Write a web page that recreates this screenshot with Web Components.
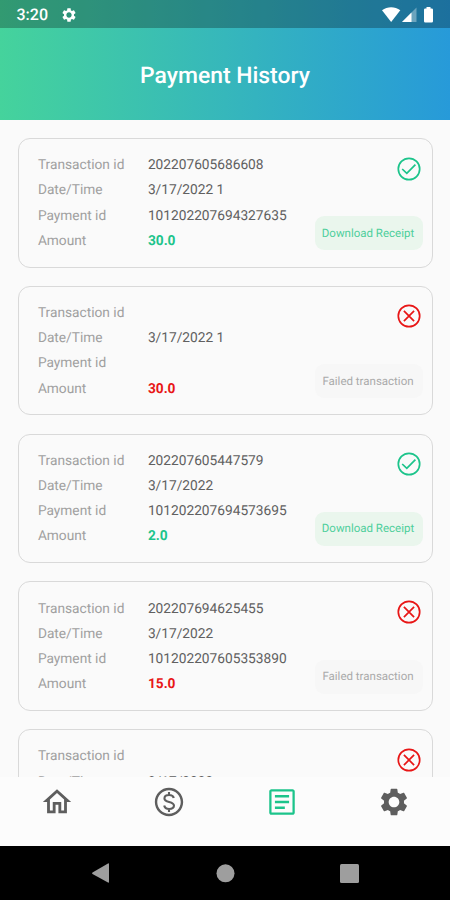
<!DOCTYPE html>
<html lang="en">
<head>
<meta charset="utf-8">
<title>Payment History</title>
<style>
html,body{margin:0;height:100%;overflow:hidden;background:#fafafa}
body{font-family:Roboto,"Noto Sans",sans-serif;text-rendering:geometricPrecision}
</style>
</head>
<body>
<payment-app></payment-app>
<script>
const define = (name, html) => {
  const t = document.createElement('template');
  t.innerHTML = html;
  customElements.define(name, class extends HTMLElement {
    constructor() {
      super();
      this.attachShadow({mode: 'open'}).append(t.content.cloneNode(true));
    }
  });
};

const ICONS = {
  gear: '<path d="M19.43 12.98c.04-.32.07-.64.07-.98s-.03-.66-.07-.98l2.11-1.65c.19-.15.24-.42.12-.64l-2-3.46c-.12-.22-.39-.3-.61-.22l-2.49 1c-.52-.4-1.08-.73-1.69-.98l-.38-2.65C14.46 2.18 14.25 2 14 2h-4c-.25 0-.46.18-.49.42l-.38 2.65c-.61.25-1.17.59-1.69.98l-2.49-1c-.23-.09-.49 0-.61.22l-2 3.46c-.13.22-.07.49.12.64l2.11 1.65c-.04.32-.07.65-.07.98s.03.66.07.98l-2.11 1.65c-.19.15-.24.42-.12.64l2 3.46c.12.22.39.3.61.22l2.49-1c.52.4 1.08.73 1.69.98l.38 2.65c.03.24.24.42.49.42h4c.25 0 .46-.18.49-.42l.38-2.65c.61-.25 1.17-.59 1.69-.98l2.49 1c.23.09.49 0 .61-.22l2-3.46c.12-.22.07-.49-.12-.64l-2.11-1.65zM12 16c-2.200 0-4-1.800-4-4s1.800-4 4-4 4 1.800 4 4-1.800 4-4 4z"/>',
  home: '<path d="M12 5.69l5 4.5V18h-2v-6H9v6H7v-7.81l5-4.5M12 3L2 12h3v8h6v-6h2v6h6v-8h3L12 3z"/>',
  dollar: '<path d="M12 2C6.48 2 2 6.48 2 12s4.48 10 10 10 10-4.48 10-10S17.52 2 12 2zm0 18.3c-4.58 0-8.3-3.72-8.3-8.3S7.42 3.7 12 3.7s8.3 3.72 8.3 8.3-3.72 8.3-8.3 8.3z"/><path d="M15.4 9.2C15 7.9 13.8 7.1 12.1 7.1c-2 0-3.3 1-3.3 2.4 0 3.2 6.7 1.7 6.7 5 0 1.5-1.4 2.4-3.4 2.4-1.9 0-3.2-.9-3.5-2.4M12 5v2.2M12 16.8V19" fill="none" stroke="currentColor" stroke-width="1.5"/>',
  article: '<path d="M19.500 3h-15C3.700 3 3 3.700 3 4.500v15c0 .8.7 1.500 1.500 1.500h15c.8 0 1.500-.7 1.500-1.500v-15c0-.8-.7-1.500-1.500-1.500zm-.1 16.4H4.6V4.6h14.8zM7 7h10v1.8H7zM7 11.1h10v1.8H7zM7 15.2h7V17H7z" fill-rule="evenodd"/>',
  ok: '<g fill="none" stroke="currentColor" stroke-width="1.7"><circle cx="12" cy="12" r="10.7"/><path d="M5.2 12l4.6 4.4 8.600-8.800"/></g>',
  fail: '<g fill="none" stroke="currentColor" stroke-width="1.7"><circle cx="12" cy="12" r="10.7"/><path d="M6.900 6.900l10.200 10.200M17.100 6.900l-10.200 10.200"/></g>'
};
customElements.define('app-icon', class extends HTMLElement {
  constructor() { super(); this.attachShadow({mode: 'open'}); }
  connectedCallback() {
    this.shadowRoot.innerHTML = `<style>:host{display:block;width:var(--size,34px);height:var(--size,34px)}svg{display:block;width:100%;height:100%}</style>
      <svg viewBox="0 0 24 24" fill="currentColor">${ICONS[this.getAttribute('name')]}</svg>`;
  }
});

define('status-bar', `<style>
  :host{display:flex;align-items:center;height:28px;box-sizing:border-box;padding:2px 15px 0 16.500px;background:rgba(0,0,0,.27);color:#fff}
  .time{font-weight:500;font-size:16px;line-height:24px;width:44.500px}
  app-icon{--size:16px}
  .right{margin-left:auto;display:block}
</style>
<span class="time">3:20</span><app-icon name="gear"></app-icon>
<svg class="right" width="53" height="18" viewBox="0 0 53 18" fill="#fff"><path d="M0 4.3C5.500.3 12.800.3 18.300 4.300L9.150 16z"/><path d="M34.500 1.500V16H20z" opacity=".35"/><path d="M29.500 6.500V16H20z"/><path d="M44.500 2.500V1h4v1.500h1.200q1.300 0 1.300 1.300v11.400q0 1.300-1.300 1.300h-6.400q-1.300 0-1.300-1.300V3.800q0-1.300 1.300-1.300z"/></svg>`);

define('app-header', `<style>
  :host{display:block;height:119.500px;flex:none;background:linear-gradient(90deg,#45d39c,#36b7bb 50%,#279ad9)}
  h1{margin:0;height:91px;display:flex;align-items:center;justify-content:center;color:#fff;font-size:22.900px;font-weight:500;padding-top:3px;box-sizing:border-box}
</style><status-bar></status-bar><h1><slot></slot></h1>`);

customElements.define('transaction-card', class extends HTMLElement {
  constructor() { super(); this.attachShadow({mode: 'open'}); }
  connectedCallback() {
    const a = n => this.getAttribute(n) || '';
    const ok = this.hasAttribute('paid');
    this.shadowRoot.innerHTML = `<style>
      :host{display:flex;justify-content:space-between;flex:none;height:129.500px;box-sizing:border-box;border:1.300px solid #d9d9d9;border-radius:12px;padding:13.500px 9px 16.300px 18.500px;--accent:${ok ? '#1cc48b' : '#e81616'}}
      dl{margin:0;padding-top:.8px;display:grid;grid-template-columns:110px auto;grid-auto-rows:25.150px;line-height:25.150px;font-size:13.720px;white-space:nowrap;align-content:start}
      dt{color:#a0a0a0}
      dd{margin:0;color:#606060}
      .amount{color:var(--accent);font-weight:700}
      .side{display:flex;flex-direction:column;align-items:flex-end;justify-content:space-between}
      app-icon{--size:24px;color:var(--accent);margin:4px 2px 0 0}
      .action{width:108px;height:34px;border-radius:9px;display:flex;align-items:center;justify-content:center;font-size:11.500px;white-space:nowrap;box-sizing:border-box;padding:0 1px 1px 0;background:${ok ? '#eaf6ed' : '#f7f7f7'};color:${ok ? '#4fcf9c' : '#aaa'}}
    </style>
    <dl><dt>Transaction id</dt><dd>${a('tid')}</dd><dt>Date/Time</dt><dd>${a('date')}</dd><dt>Payment id</dt><dd>${a('pid')}</dd><dt>Amount</dt><dd class="amount">${a('amount')}</dd></dl>
    <div class="side"><app-icon name="${ok ? 'ok' : 'fail'}"></app-icon><div class="action">${ok ? 'Download Receipt' : 'Failed transaction'}</div></div>`;
  }
});

define('tab-bar', `<style>
  :host{display:grid;grid-template-columns:repeat(4,1fr);justify-items:center;align-items:center;height:69px;flex:none;box-sizing:border-box;padding:0 0 19px 1px;background:#fcfcfc;color:#5e5e5e}
  .on{color:#1cc48b}
  .settings{--size:32px}
</style><app-icon name="home"></app-icon><app-icon name="dollar"></app-icon><app-icon name="article" class="on"></app-icon><app-icon name="gear" class="settings"></app-icon>`);

define('system-nav', `<style>
  :host{display:block;height:54px;flex:none;background:#000}
  svg{display:block}
</style><svg width="450" height="54" viewBox="0 0 450 54" fill="#9e9e9e"><path d="M108 17.500q1 -.5 1 .8v17.400q0 1.300-1 .8L92.500 28q-1-.8 0-1.600z"/><circle cx="225.500" cy="27.300" r="9"/><rect x="340" y="18" width="19" height="19" rx="1.500"/></svg>`);

define('payment-app', `<style>
  :host{display:flex;flex-direction:column;width:450px;height:900px;background:#fafafa}
  main{flex:1;min-height:0;overflow:hidden;display:flex;flex-direction:column;gap:18.300px;padding:18.500px 17.500px 0 18.400px}
</style>
<app-header>Payment History</app-header>
<main>
  <transaction-card paid tid="202207605686608" date="3/17/2022 1" pid="101202207694327635" amount="30.0"></transaction-card>
  <transaction-card date="3/17/2022 1" amount="30.0"></transaction-card>
  <transaction-card paid tid="202207605447579" date="3/17/2022" pid="101202207694573695" amount="2.0"></transaction-card>
  <transaction-card tid="202207694625455" date="3/17/2022" pid="101202207605353890" amount="15.0"></transaction-card>
  <transaction-card date="3/17/2022" amount="15.0"></transaction-card>
</main>
<tab-bar></tab-bar>
<system-nav></system-nav>`);
</script>
</body>
</html>
